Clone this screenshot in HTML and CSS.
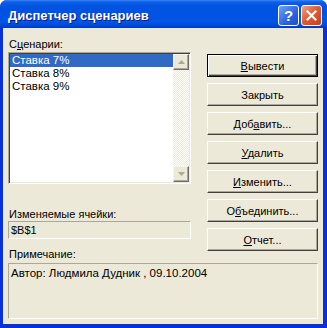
FILE: index.html
```html
<!DOCTYPE html>
<html lang="ru">

<head>
    <meta charset="utf-8">
    <title>Диспетчер сценариев</title>
    <link rel="stylesheet" href="styles.css">
</head>

<body>
    <div class="window">
        <div class="titlebar">
            <span class="title">Диспетчер сценариев</span>
            <div class="caption">
                <span class="cap-btn help">?</span>
                <span class="cap-btn close">
                    <svg width="11" height="11" viewBox="0 0 11 11">
                        <path d="M1.5 1.5 L9.5 9.5 M9.5 1.5 L1.5 9.5" stroke="#fff" stroke-width="2.2" stroke-linecap="square" fill="none"/>
                    </svg>
                </span>
            </div>
        </div>

        <div class="client">
            <div class="label">С<u>ц</u>енарии:</div>

            <div class="listbox">
                <ul class="items">
                    <li class="sel">Ставка 7%</li>
                    <li>Ставка 8%</li>
                    <li>Ставка 9%</li>
                </ul>
                <div class="scrollbar">
                    <div class="sb-btn">
                        <svg width="7" height="4" viewBox="0 0 7 4"><path d="M3.5 0 L7 4 L0 4 Z" fill="#aca899"/></svg>
                    </div>
                    <div class="sb-track"></div>
                    <div class="sb-btn">
                        <svg width="7" height="4" viewBox="0 0 7 4"><path d="M0 0 L7 0 L3.5 4 Z" fill="#aca899"/></svg>
                    </div>
                </div>
            </div>

            <div class="label label-cells">Изменяемые ячейки:</div>
            <div class="field">$B$1</div>

            <div class="label label-note">Примечание:</div>
            <div class="note">Автор: Людмила Дудник , 09.10.2004</div>

            <div class="buttons">
                <button class="btn default"><u>В</u>ывести</button>
                <button class="btn">Закрыть</button>
                <button class="btn">Доб<u>а</u>вить...</button>
                <button class="btn"><u>У</u>далить</button>
                <button class="btn"><u>И</u>зменить...</button>
                <button class="btn">О<u>б</u>ъединить...</button>
                <button class="btn"><u>О</u>тчет...</button>
            </div>
        </div>
    </div>
</body>

</html>
```

FILE: styles.css
```css
html,
body {
    margin: 0;
    padding: 0;
    background: #fff;
}

.window {
    width: 327px;
    height: 328px;
    display: flex;
    flex-direction: column;
    background: #0831d9;
    border-radius: 7px 7px 0 0;
    overflow: hidden;
}

/* TITLE BAR */

.titlebar {
    height: 28px;
    flex: none;
    display: flex;
    align-items: center;
    justify-content: space-between;
    padding: 0 5px 0 8px;
    background: linear-gradient(to bottom, #3a86f2 0, #0f5fe8 2px, #0054e0 6px, #0052e0 14px, #0055e8 22px, #0046d2 26px, #003ab2 28px);
}

.title {
    font-family: "Liberation Sans", Arial, sans-serif;
    font-weight: bold;
    font-size: 13px;
    color: #fff;
    text-shadow: 1px 1px #0a1883;
    margin-top: 2px;
}

.caption {
    display: flex;
    gap: 2px;
    margin-top: 2px;
}

.cap-btn {
    width: 19px;
    height: 19px;
    border: 1px solid #fff;
    border-radius: 3px;
    display: flex;
    align-items: center;
    justify-content: center;
    font-family: "Liberation Sans", Arial, sans-serif;
    font-weight: bold;
    font-size: 15px;
    color: #fff;
}

.help {
    background: linear-gradient(to bottom right, #6ea4f8, #2a63df 60%, #1d4fc8);
}

.close {
    background: linear-gradient(to bottom right, #f0a184, #e0582f 50%, #c4401c);
}

/* CLIENT AREA */

.client {
    flex: 1;
    margin: 0 4px 4px 3px;
    padding: 10px 5px 5px 5px;
    background: #ece9d8;
    display: grid;
    grid-template-columns: 183px 111px;
    column-gap: 16px;
    grid-template-rows: auto auto auto auto auto auto;
    align-content: start;
    font-family: "Liberation Sans", Arial, sans-serif;
    font-size: 11px;
    color: #000;
}

.label {
    grid-column: 1;
    line-height: 13px;
    height: 13px;
    padding-left: 1px;
}

.label-cells {
    margin-top: 24px;
}

.label-note {
    margin-top: 9px;
}

/* LIST */

.listbox {
    grid-column: 1;
    margin-top: 1px;
    height: 132px;
    box-sizing: border-box;
    border: 1px solid;
    border-color: #aca899 #fff #fff #aca899;
    box-shadow: inset 1px 1px #404040, inset -1px -1px #ece9d8;
    background: #fff;
    display: flex;
    padding: 1px;
}

.items {
    list-style: none;
    margin: 0;
    padding: 0;
    flex: 1;
    font-size: 11.5px;
}

.items li {
    height: 13px;
    line-height: 13px;
    padding-left: 2px;
}

.items li.sel {
    background: #316ac5;
    color: #fff;
}

.scrollbar {
    width: 16px;
    display: flex;
    flex-direction: column;
}

.sb-btn {
    height: 16px;
    box-sizing: border-box;
    background: #ece9d8;
    border: 1px solid;
    border-color: #f5f4ee #716f64 #716f64 #f5f4ee;
    box-shadow: inset -1px -1px #aca899;
    display: flex;
    align-items: center;
    justify-content: center;
}

.sb-track {
    flex: 1;
    background: repeating-conic-gradient(#fff 0 25%, #ece9d8 0 50%) 0 0 / 2px 2px;
}

/* FIELDS */

.field {
    grid-column: 1;
    height: 18px;
    box-sizing: border-box;
    border: 1px solid;
    border-color: #aca899 #fff #fff #aca899;
    padding: 2px 0 0 2px;
    line-height: 13px;
}

.note {
    grid-column: 1 / 3;
    margin-top: 2px;
    height: 56px;
    box-sizing: border-box;
    border: 1px solid;
    border-color: #aca899 #fff #fff #aca899;
    padding: 3px 0 0 2px;
    line-height: 13px;
    font-size: 11.5px;
}

/* BUTTONS */

.buttons {
    grid-column: 2;
    grid-row: 1 / 6;
    display: flex;
    flex-direction: column;
    gap: 6px;
    margin-top: 16px;
}

.btn {
    height: 23px;
    margin: 0;
    padding: 0;
    box-sizing: border-box;
    font-family: inherit;
    font-size: 11px;
    color: #000;
    background: #ece9d8;
    border: 1px solid;
    border-color: #fff #404040 #404040 #fff;
    box-shadow: inset -1px -1px #aca899;
}

.btn.default {
    border: 1px solid #000;
    box-shadow: inset 1px 1px #fff, inset -1px -1px #404040, inset -2px -2px #aca899;
}
```
